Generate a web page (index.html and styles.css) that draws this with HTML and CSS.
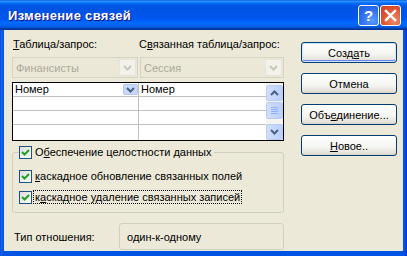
FILE: index.html
```html
<!DOCTYPE html>
<html lang="ru">
<head>
  <meta charset="UTF-8" />
  <title>Изменение связей</title>
  <link rel="stylesheet" href="styles.css">
</head>
<body>
  <div class="window">
    <div class="titlebar">
      <span class="title">Изменение связей</span>
      <div class="title-buttons">
        <span class="tbtn help">?</span>
        <span class="tbtn close">
          <svg width="13" height="13" viewBox="0 0 13 13"><path d="M2 2 L11 11 M11 2 L2 11" stroke="#fff" stroke-width="2.4" stroke-linecap="square"/></svg>
        </span>
      </div>
    </div>

    <div class="client">
      <div class="main">
        <div class="labels">
          <span><u>Т</u>аблица/запрос:</span>
          <span>С<u>в</u>язанная таблица/запрос:</span>
        </div>

        <div class="combos">
          <div class="combo">
            <span>Финансисты</span>
            <span class="drop"><svg width="9" height="6" viewBox="0 0 9 6"><path d="M1 1 L4.5 4.5 L8 1" stroke="#c9c7ba" stroke-width="2" fill="none"/></svg></span>
          </div>
          <div class="combo">
            <span>Сессия</span>
            <span class="drop"><svg width="9" height="6" viewBox="0 0 9 6"><path d="M1 1 L4.5 4.5 L8 1" stroke="#c9c7ba" stroke-width="2" fill="none"/></svg></span>
          </div>
        </div>

        <div class="grid">
          <div class="cells">
            <div class="cell">Номер
              <span class="cell-drop"><svg width="9" height="6" viewBox="0 0 9 6"><path d="M1 1 L4.5 4.5 L8 1" stroke="#4d6185" stroke-width="2" fill="none"/></svg></span>
            </div>
            <div class="cell">Номер</div>
            <div class="cell"></div>
            <div class="cell"></div>
            <div class="cell"></div>
            <div class="cell"></div>
            <div class="cell last"></div>
            <div class="cell last"></div>
          </div>
          <div class="scrollbar">
            <span class="sbtn"><svg width="9" height="6" viewBox="0 0 9 6"><path d="M1 5 L4.5 1.5 L8 5" stroke="#4d6185" stroke-width="2" fill="none"/></svg></span>
            <span class="thumb"><i></i><i></i><i></i><i></i></span>
            <span class="sbtn down"><svg width="9" height="6" viewBox="0 0 9 6"><path d="M1 1 L4.5 4.5 L8 1" stroke="#4d6185" stroke-width="2" fill="none"/></svg></span>
          </div>
        </div>

        <fieldset class="group">
          <legend>
            <label class="check">
              <span class="box"><svg width="11" height="11" viewBox="0 0 11 11"><path d="M2 5 L4.5 7.5 L9 3" stroke="#21a121" stroke-width="2" fill="none"/></svg></span>
              <span class="text">О<u>б</u>еспечение целостности данных</span>
            </label>
          </legend>
          <label class="check">
            <span class="box"><svg width="11" height="11" viewBox="0 0 11 11"><path d="M2 5 L4.5 7.5 L9 3" stroke="#21a121" stroke-width="2" fill="none"/></svg></span>
            <span class="text"><u>к</u>аскадное обновление связанных полей</span>
          </label>
          <label class="check">
            <span class="box"><svg width="11" height="11" viewBox="0 0 11 11"><path d="M2 5 L4.5 7.5 L9 3" stroke="#21a121" stroke-width="2" fill="none"/></svg></span>
            <span class="text focus">к<u>а</u>скадное удаление связанных записей</span>
          </label>
        </fieldset>

        <div class="type-row">
          <span class="type-label">Тип отношения:</span>
          <span class="type-value">один-к-одному</span>
        </div>
      </div>

      <div class="buttons">
        <button class="btn default">Созд<u>а</u>ть</button>
        <button class="btn">Отмена</button>
        <button class="btn">Объ<u>е</u>динение...</button>
        <button class="btn"><u>Н</u>овое..</button>
      </div>
    </div>
  </div>
</body>
</html>
```

FILE: styles.css
```css
* { box-sizing: border-box; margin: 0; padding: 0; }
body {
  font-family: 'Liberation Sans', sans-serif;
  font-size: 11px;
  color: #000;
  width: 407px;
  height: 256px;
  overflow: hidden;
}
u { text-decoration: underline; text-underline-offset: 1px; }

.window {
  width: 407px;
  height: 256px;
  display: flex;
  flex-direction: column;
  background: linear-gradient(to right, #0831d9 0, #166aee 1px, #0855dd 3px, #0054e3 4px, #0054e3 403px, #0855dd 404px, #0831d9 407px);
}
.titlebar {
  height: 30px;
  flex: none;
  display: flex;
  align-items: center;
  justify-content: space-between;
  padding: 0 6px 0 8px;
  background: linear-gradient(to bottom, #0058ee 0%, #3593ff 4%, #288eff 6%, #127dff 8%, #036ffc 10%, #0262ee 14%, #0057e5 20%, #0054e3 24%, #0055eb 56%, #005bf5 66%, #026afe 76%, #0062ef 86%, #0052d6 92%, #0040ab 94%, #003092 100%);
}
.title {
  color: #fff;
  font-weight: bold;
  font-size: 13px;
  letter-spacing: 0.3px;
  text-shadow: 1px 1px #0f1089;
  margin-top: 1px;
}
.title-buttons { display: flex; gap: 1px; margin-top: 1px; }
.tbtn {
  width: 21px;
  height: 21px;
  border: 1px solid #fff;
  border-radius: 3px;
  display: flex;
  align-items: center;
  justify-content: center;
  color: #fff;
  font-weight: bold;
  font-size: 15px;
}
.help {
  background: radial-gradient(circle at 70% 75%, #5a9bff 0%, #2f6ff0 55%, #1b56dc 100%);
}
.close {
  background: radial-gradient(circle at 70% 75%, #e98b6b 0%, #e0552f 55%, #c8401f 100%);
}

.client {
  flex: 1;
  margin: 0 4px 5px;
  background: #ece9d8;
  display: flex;
  padding: 7px 6px 0 8px;
  gap: 17px;
}
.main { width: 272px; display: flex; flex-direction: column; }

.labels {
  display: grid;
  grid-template-columns: 126px 146px;
  height: 14px;
  line-height: 14px;
}
.labels span { padding-left: 1px; }

.combos {
  display: grid;
  grid-template-columns: 126px 144px;
  gap: 2px;
  margin-top: 6px;
}
.combo {
  height: 21px;
  border: 1px solid #d6d3c6;
  background: #ebe8d8;
  display: flex;
  align-items: center;
  padding-left: 3px;
  color: #aca899;
}
.combo span:first-child { flex: 1; }
.drop {
  width: 17px;
  height: 17px;
  margin-right: 1px;
  display: flex;
  align-items: center;
  justify-content: center;
  background: #f3f2ea;
  border: 1px solid #e6e4d8;
  border-radius: 2px;
}

.grid {
  margin-top: 4px;
  height: 59px;
  border: 1px solid #000;
  background: #fff;
  display: flex;
}
.cells {
  flex: 1;
  display: grid;
  grid-template-columns: 126px 127px;
  grid-template-rows: 14px 14px 14px 15px;
}
.cell {
  border-bottom: 1px solid #c0c0c0;
  display: flex;
  align-items: center;
  padding-left: 2px;
  line-height: 13px;
}
.cell:nth-child(odd) { border-right: 1px solid #c0c0c0; }
.cell.last { border-bottom: none; }
.cell-drop {
  margin-left: auto;
  width: 15px;
  height: 11px;
  background: #c8d8fb;
  border: 1px solid #b4c7f3;
  border-radius: 2px;
  display: flex;
  align-items: center;
  justify-content: center;
}

.scrollbar {
  width: 17px;
  background: #f5f4ef;
  display: flex;
  flex-direction: column;
  padding-top: 2px;
}
.sbtn, .thumb {
  height: 16px;
  background: linear-gradient(to right, #d2defc, #bcd0fa);
  border: 1px solid #b7cbf7;
  border-radius: 2px;
  display: flex;
  align-items: center;
  justify-content: center;
}
.thumb {
  margin-top: 1px;
  height: 17px;
  flex-direction: column;
  gap: 1px;
}
.thumb i {
  display: block;
  width: 7px;
  height: 1px;
  background: #8cb0f8;
}
.sbtn.down { margin-top: auto; }

.group {
  margin-top: 4px;
  height: 68px;
  border: 1px solid #d0d0bf;
  border-radius: 3px;
  padding: 0 0 0 6px;
  display: flex;
  flex-direction: column;
  gap: 7px;
}
.group legend { padding-right: 2px; }
.check {
  display: flex;
  align-items: center;
  height: 14px;
}
.box {
  width: 13px;
  height: 13px;
  border: 1px solid #1c5180;
  background: linear-gradient(135deg, #dcdcd7, #fff);
  display: flex;
}
.check .text { margin-left: 2px; padding: 0 1px; }
.group > .check:first-of-type { margin-top: 10px; }
.text.focus { outline: 1px dotted #000; outline-offset: 0; line-height: 12px; }

.type-row {
  margin-top: 10px;
  display: flex;
  align-items: center;
}
.type-label { width: 107px; padding-left: 2px; }
.type-value {
  width: 165px;
  height: 27px;
  border: 1px solid #d0d0bf;
  border-radius: 3px;
  display: flex;
  align-items: center;
  padding-left: 7px;
}

.buttons {
  display: flex;
  flex-direction: column;
  gap: 10px;
  padding-top: 5px;
}
.btn {
  width: 96px;
  height: 21px;
  font-family: inherit;
  font-size: 11px;
  color: #000;
  border: 1px solid #003c74;
  border-radius: 3px;
  background: linear-gradient(to bottom, #fff 0%, #f4f4f0 60%, #e3e1d8 90%, #d6d0c5 100%);
}
.btn.default { box-shadow: inset 0 0 0 1px #cee7ff, inset 0 -1px 0 1px #6982ee; }
```
